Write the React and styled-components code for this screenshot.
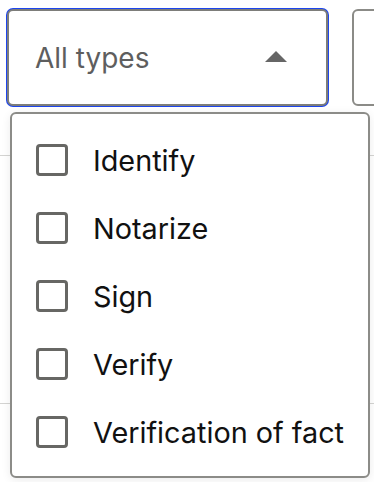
import React, { useState } from "react";
import styled, { createGlobalStyle } from "styled-components";

const types = ["Identify", "Notarize", "Sign", "Verify", "Verification of fact"];

const Global = createGlobalStyle`
  html, body {
    margin: 0;
    background: #ffffff;
    font-family: Inter, "Noto Sans", sans-serif;
  }
`;

const Page = styled.div`
  padding: 9px 0 0 7px;
  overflow: hidden;
  height: 473px;
`;

const Toolbar = styled.div`
  display: flex;
  gap: 24px;
`;

const SelectWrap = styled.div`
  position: relative;
  flex: none;
`;

const Trigger = styled.button`
  box-sizing: border-box;
  width: 321px;
  height: 97px;
  display: flex;
  align-items: center;
  justify-content: space-between;
  padding: 0 39px 0 26px;
  background: #fff;
  border: 2px solid #7d7d7a;
  border-radius: 6px;
  box-shadow: 0 0 0 1px #1d45ee;
  font-family: inherit;
  font-size: 28px;
  color: #5e5e5e;
  cursor: pointer;
`;

const Caret = styled.span`
  width: 0;
  height: 0;
  border-left: 11px solid transparent;
  border-right: 11px solid transparent;
  border-bottom: 11px solid #666;
  margin-top: -2px;
`;

const OtherFilter = styled.div`
  box-sizing: border-box;
  width: 120px;
  height: 97px;
  border: 2px solid #8b8b87;
  border-radius: 6px;
  flex: none;
`;

const Table = styled.div`
  margin: 49px 0 0 -7px;
`;

const TableRow = styled.div`
  height: 247px;
  border-top: 1px solid #d4d4d2;
`;

const Menu = styled.ul`
  position: absolute;
  top: 103px;
  left: 3px;
  box-sizing: border-box;
  width: 360px;
  margin: 0;
  padding: 12px 0 10px;
  list-style: none;
  background: #fff;
  border: 2px solid #8c8c88;
  border-radius: 6px;
  box-shadow: 0 2px 10px rgba(0, 0, 0, 0.08);
  z-index: 2;
`;

const Option = styled.li`
  height: 68px;
  display: flex;
  align-items: center;
  gap: 25px;
  padding-left: 24px;
  font-size: 28.8px;
  color: #111;
  cursor: pointer;
`;

const Box = styled.span`
  box-sizing: border-box;
  width: 32px;
  height: 32px;
  border: 3px solid #676764;
  border-radius: 4px;
  background: ${(p) => (p.checked ? "#676764" : "#fff")};
  flex: none;
`;

export default function App() {
  const [checked, setChecked] = useState({});

  return (
    <>
      <Global />
      <Page>
        <Toolbar>
          <SelectWrap>
            <Trigger>
              All types
              <Caret />
            </Trigger>
            <Menu>
              {types.map((t) => (
                <Option
                  key={t}
                  onClick={() => setChecked({ ...checked, [t]: !checked[t] })}
                >
                  <Box checked={checked[t]} />
                  {t}
                </Option>
              ))}
            </Menu>
          </SelectWrap>
          <OtherFilter />
        </Toolbar>
        <Table>
          <TableRow />
          <TableRow />
        </Table>
      </Page>
    </>
  );
}
